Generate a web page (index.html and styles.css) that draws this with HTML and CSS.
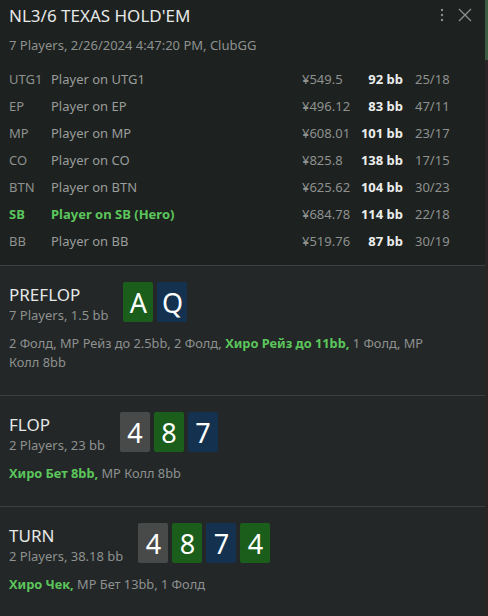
FILE: index.html
```html
<!DOCTYPE html>
<html>
<head>
<meta charset="utf-8">
<link rel="stylesheet" href="styles.css">
</head>
<body>
<div class="app">
  <div class="panel">
    <header class="header">
      <div class="head-top">
        <h1 class="title">NL3/6 TEXAS HOLD'EM</h1>
        <div class="head-icons">
          <svg class="icon-dots" width="4" height="14" viewBox="0 0 4 14"><circle cx="2" cy="2" r="1.2" fill="#8c8f8e"/><circle cx="2" cy="7" r="1.2" fill="#8c8f8e"/><circle cx="2" cy="12" r="1.2" fill="#8c8f8e"/></svg>
          <svg class="icon-close" width="14" height="14" viewBox="0 0 14 14"><path d="M1 1 L13 13 M13 1 L1 13" stroke="#8c8f8e" stroke-width="1.3" fill="none"/></svg>
        </div>
      </div>
      <div class="subtitle">7 Players, 2/26/2024 4:47:20 PM, ClubGG</div>
      <div class="players">
        <div class="prow"><span class="pos">UTG1</span><span class="pname">Player on UTG1</span><span class="stack">¥549.5</span><span class="bb">92 bb</span><span class="ratio">25/18</span></div>
        <div class="prow"><span class="pos">EP</span><span class="pname">Player on EP</span><span class="stack">¥496.12</span><span class="bb">83 bb</span><span class="ratio">47/11</span></div>
        <div class="prow"><span class="pos">MP</span><span class="pname">Player on MP</span><span class="stack">¥608.01</span><span class="bb">101 bb</span><span class="ratio">23/17</span></div>
        <div class="prow"><span class="pos">CO</span><span class="pname">Player on CO</span><span class="stack">¥825.8</span><span class="bb">138 bb</span><span class="ratio">17/15</span></div>
        <div class="prow"><span class="pos">BTN</span><span class="pname">Player on BTN</span><span class="stack">¥625.62</span><span class="bb">104 bb</span><span class="ratio">30/23</span></div>
        <div class="prow hero"><span class="pos">SB</span><span class="pname">Player on SB (Hero)</span><span class="stack">¥684.78</span><span class="bb">114 bb</span><span class="ratio">22/18</span></div>
        <div class="prow"><span class="pos">BB</span><span class="pname">Player on BB</span><span class="stack">¥519.76</span><span class="bb">87 bb</span><span class="ratio">30/19</span></div>
      </div>
    </header>

    <section class="street">
      <div class="street-head">
        <div class="street-info">
          <div class="street-name">PREFLOP</div>
          <div class="street-sub">7 Players, 1.5 bb</div>
        </div>
        <div class="cards">
          <span class="card green">A</span><span class="card blue">Q</span>
        </div>
      </div>
      <p class="actions">2 Фолд, MP Рейз до 2.5bb, 2 Фолд, <b class="hl">Хиро Рейз до 11bb,</b> 1 Фолд, MP Колл 8bb</p>
    </section>

    <section class="street">
      <div class="street-head">
        <div class="street-info">
          <div class="street-name">FLOP</div>
          <div class="street-sub">2 Players, 23 bb</div>
        </div>
        <div class="cards">
          <span class="card gray">4</span><span class="card green">8</span><span class="card blue">7</span>
        </div>
      </div>
      <p class="actions"><b class="hl">Хиро Бет 8bb,</b> MP Колл 8bb</p>
    </section>

    <section class="street">
      <div class="street-head">
        <div class="street-info">
          <div class="street-name">TURN</div>
          <div class="street-sub">2 Players, 38.18 bb</div>
        </div>
        <div class="cards">
          <span class="card gray">4</span><span class="card green">8</span><span class="card blue">7</span><span class="card green">4</span>
        </div>
      </div>
      <p class="actions"><b class="hl">Хиро Чек,</b> MP Бет 13bb, 1 Фолд</p>
    </section>
  </div>
  <div class="scrollbar"><div class="thumb"></div></div>
</div>
</body>
</html>
```
FILE: styles.css
```css
* { box-sizing: border-box; }
html, body { margin: 0; padding: 0; height: 100%; }
body {
  background: #232727;
  font-family: "Segoe UI", "Noto Sans", "Open Sans", sans-serif;
  color: #8e9190;
  overflow: hidden;
}
.app { display: flex; height: 616px; }
.panel { flex: 1; min-width: 0; }
.scrollbar { width: 3px; background: #2a2424; }
.thumb { height: 60px; background: #3d5a45; }

.header {
  background: #1d211f;
  padding: 5px 0 11px 9px;
  border-bottom: 1px solid #3c403f;
}
.head-top { display: flex; justify-content: space-between; align-items: flex-start; }
.title {
  margin: 0;
  font-weight: 400;
  font-size: 17px;
  line-height: 22px;
  color: #e6e8e7;
}
.head-icons { display: flex; align-items: center; gap: 14px; padding-right: 13px; padding-top: 3px; }
.subtitle { font-size: 13px; line-height: 18px; margin-top: 9px; color: #8e9190; }

.players { margin-top: 11px; }
.prow {
  display: flex;
  align-items: center;
  height: 27px;
  font-size: 13px;
  white-space: nowrap;
}
.pos { width: 42px; }
.pname { width: 251px; color: #9a9d9c; }
.stack { width: 52px; }
.bb { width: 49px; text-align: right; font-weight: 700; color: #eceeed; }
.ratio { margin-left: 12px; }
.prow.hero .pos, .prow.hero .pname { color: #5cc65c; font-weight: 700; }

.street {
  padding: 16px 0 23px 9px;
  border-bottom: 1px solid #3c403f;
}
.street:last-child { border-bottom: none; }
.street-head { display: flex; align-items: flex-start; }
.street-info { margin-right: 15px; padding-top: 2px; }
.street-name { font-size: 17px; line-height: 22px; color: #e6e8e7; }
.street-sub { font-size: 13px; line-height: 18px; color: #8e9190; }
.cards { display: flex; gap: 4px; }
.card {
  width: 30px;
  height: 40px;
  border-radius: 2px;
  display: flex;
  align-items: center;
  justify-content: center;
  font-size: 27px;
  color: #ffffff;
  font-family: "Noto Sans", "Open Sans", sans-serif;
}
.card.green { background: #1b5e1b; }
.card.blue { background: #14324f; }
.card.gray { background: #474a49; }

.actions {
  margin: 10px 0 0;
  font-size: 12.8px;
  line-height: 19px;
  padding-right: 60px;
}
.hl { color: #5cc65c; font-weight: 700; }
```
